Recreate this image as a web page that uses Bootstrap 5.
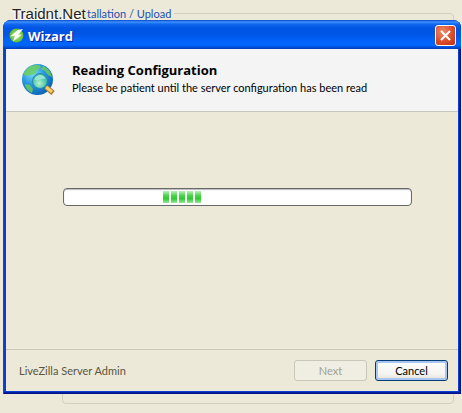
<!DOCTYPE html>
<html lang="en">
<head>
<meta charset="utf-8">
<meta name="viewport" content="width=device-width, initial-scale=1">
<title>Wizard</title>
<link rel="stylesheet" href="https://cdn.jsdelivr.net/npm/bootstrap@5.3.0/dist/css/bootstrap.min.css">
<style>
body{background:#ece9d8;font-family:Lato,"Liberation Sans",sans-serif;font-size:11px;line-height:14px;color:#000}
.desk{padding:20px 1px 19px 3px}
.group-frame{position:absolute;inset:13px 8px 9px 62px;border:1px solid #d0d0bf;border-radius:4px}
.group-label{position:absolute;left:87px;top:7px;background:#ece9d8;color:#1c4fb0;padding-right:3px}
.watermark{position:absolute;left:12px;top:4px;font:15px/20px "Liberation Sans",sans-serif;color:#222;background:#ece9d8;text-shadow:-1px 1px 0 #fff,0 2px 0 #fff}
.wizard{min-height:374px;background:#0b3fd0;border-radius:8px 8px 0 0;padding:0 3px 3px;box-shadow:inset 1px 0 #1548c8,inset -1px -1px #00138c,inset -2px -2px #001ea0}
.title-bar{height:29px;margin:0 -3px;padding:2px 5px 0 6px;border-radius:8px 8px 0 0;background:linear-gradient(#0a45c5 0,#3c93ff 2px,#1268f0 4px,#0054e3 8px,#0055e5 14px,#0163fa 21px,#0066ff 25px,#0052dc 27px,#0039b5 29px)}
.title-bar h1{font:bold 13px/18px "Open Sans","Noto Sans",sans-serif;color:#fff;text-shadow:1px 1px #00259a}
.close-btn{width:21px;height:21px;border:1px solid #fff;border-radius:3px;background:radial-gradient(circle at 35% 30%,#ef8b6c,#db4d29 55%,#bd3110)}
.head-pane{min-height:63px;background:#f4f4f4;border-bottom:1px solid #c9c8bf;padding:13px 16px 0}
.head-pane svg{margin-top:1px}
.head-pane h2{font:bold 13px/16px "Open Sans","Noto Sans",sans-serif}
.head-pane p{padding-top:3px}
.work-pane{padding:76px 46px 0 57px;background:#ece9d8}
.meter{height:18px;border:1px solid #686868;border-radius:4px;background:#fff;box-shadow:inset 0 1px 1px #bbb;padding:2px 0 2px 99px;gap:2px}
.meter .block{width:6px;background:linear-gradient(#bdf0bb,#48d247 40%,#32c932 65%,#9ae89a)}
.foot-pane{min-height:42px;background:#ece9d8;border-top:1px solid #cbc8b8;padding:0 10px 0 13px}
.brand-note{color:#5a563e}
.xp-btn{width:73px;height:21px;border:1px solid #003c74;border-radius:3px;color:#000;background:linear-gradient(#fff,#f3f3ef 70%,#e2dfd6);box-shadow:inset 0 0 0 2px #a9c6f3;padding:0}
.xp-btn:disabled{border-color:#c9c7ba;color:#a1a192;background:#f0eee2;box-shadow:none}
</style>
<script src="https://cdn.jsdelivr.net/npm/bootstrap@5.3.0/dist/js/bootstrap.bundle.min.js"></script>
</head>
<body>
<div class="desk position-relative min-vh-100 d-flex flex-column">
  <div class="group-frame"></div>
  <span class="group-label">tallation / Upload</span>
  <span class="watermark">Traidnt.Net</span>
  <main class="wizard position-relative flex-grow-1 d-flex flex-column">
    <header class="title-bar d-flex align-items-center gap-1">
      <svg width="15" height="15" viewBox="0 0 15 15" aria-hidden="true"><defs><radialGradient id="leaf"><stop offset="0" stop-color="#c8f2a0"/><stop offset="1" stop-color="#58b82c"/></radialGradient></defs><circle cx="7.500" cy="7.500" r="7" fill="url(#leaf)"/><path d="M14 1 9 2 1 8.500l5-1L4 13.500 13 6.500l-4 .5z" fill="#fff"/></svg>
      <h1 class="m-0 flex-grow-1">Wizard</h1>
      <button type="button" class="close-btn p-0 d-flex align-items-center justify-content-center" aria-label="Close"><svg width="13" height="13" viewBox="0 0 13 13"><path d="m2 2 9 9M11 2l-9 9" stroke="#fff" stroke-width="2"/></svg></button>
    </header>
    <section class="head-pane d-flex align-items-start">
      <svg class="flex-shrink-0" width="34" height="34" viewBox="0 0 34 34" aria-hidden="true">
        <defs><radialGradient id="sea" cx=".35" cy=".3" r=".75"><stop offset="0" stop-color="#7ddcfa"/><stop offset=".5" stop-color="#2796df"/><stop offset="1" stop-color="#0862b5"/></radialGradient><radialGradient id="lens" cx=".45" cy=".65"><stop offset="0" stop-color="#b5f5cc"/><stop offset="1" stop-color="#42bda0"/></radialGradient></defs>
        <circle cx="15.500" cy="16.500" r="15.500" fill="url(#sea)"/>
        <path d="M2 10C5 4 10 1.500 17 2l2 2-4 3-2 4-5 1-3 1-3-1zM21 3c5 2 8 6 9 11l-4-2-3-4-4-2zM3 21l5 1 3 4-1 4C6 28 3 25 3 21z" fill="#6fcf52" opacity=".8"/>
        <path d="m24 24 7 6" stroke="#a87425" stroke-width="5"/><path d="m24 24 6 5" stroke="#f4d069" stroke-width="3"/>
        <circle cx="18" cy="18" r="7.500" fill="url(#lens)" stroke="#2a86b5"/><path d="M12.500 17c1-6 9-7 11-1-4-1-7 2-11 1z" fill="#9be5d6"/>
      </svg>
      <div class="ps-3">
        <h2 class="m-0">Reading Configuration</h2>
        <p class="m-0">Please be patient until the server configuration has been read</p>
      </div>
    </section>
    <section class="work-pane flex-grow-1"><div class="meter d-flex" role="progressbar" aria-label="Reading configuration"><span class="block"></span><span class="block"></span><span class="block"></span><span class="block"></span><span class="block"></span></div></section>
    <footer class="foot-pane d-flex align-items-center">
      <span class="brand-note flex-grow-1">LiveZilla Server Admin</span>
      <button type="button" class="xp-btn me-2" disabled>Next</button>
      <button type="button" class="xp-btn">Cancel</button>
    </footer>
  </main>
</div>
</body>
</html>
